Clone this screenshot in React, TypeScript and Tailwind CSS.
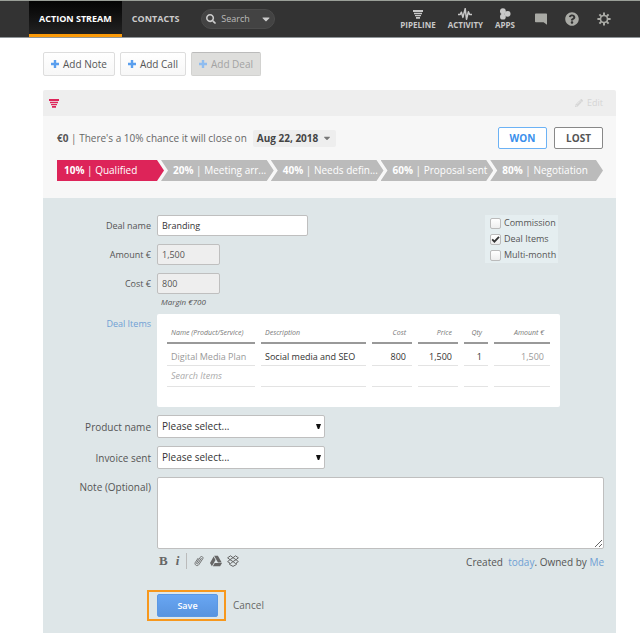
import React from "react";
import { FaCaretDown, FaGoogleDrive, FaPencilAlt, FaQuestionCircle, FaSearch } from "react-icons/fa";

function FunnelIcon({ className }: { className: string }) {
  return (
    <svg viewBox="0 0 10 9" className={"h-[9px] w-2.5 " + className} fill="currentColor" aria-hidden="true">
      <path d="M0 0h10v2H0zM1 2.700h8v1.500H1zM2 4.900h6v1.400H2zM3 7h4v1.800H3z" />
    </svg>
  );
}

function PlusIcon({ className }: { className: string }) {
  return (
    <svg viewBox="0 0 8 8" className={"size-2 " + className} fill="none" stroke="currentColor" strokeWidth="2.4" aria-hidden="true">
      <path d="M4 0v8M0 4h8" />
    </svg>
  );
}

function PulseIcon() {
  return (
    <svg viewBox="0 0 14 12" className="h-3 w-3.5" fill="none" stroke="currentColor" strokeWidth="1.5" strokeLinejoin="round" aria-hidden="true">
      <path d="M0 6.5h2.2l1.2-2.3 1.5 5.2L7.2.6l1.3 10.6 1.9-7.4 1.2 2.7H14" />
    </svg>
  );
}

function AppsIcon() {
  return (
    <svg viewBox="0 0 12 12" className="h-3 w-3" fill="currentColor" aria-hidden="true">
      <circle cx="3.9" cy="3.2" r="2.9" />
      <circle cx="8.6" cy="5.8" r="2.9" />
      <circle cx="3.9" cy="8.7" r="2.9" />
    </svg>
  );
}

function ChatIcon() {
  return (
    <svg viewBox="0 0 12 12" className="h-3 w-3" fill="currentColor" aria-hidden="true">
      <path d="M.8.4h10.4q.8 0 .8.8v10.5L8.6 9.2H.8Q0 9.2 0 8.4V1.2Q0 .4.8.4z" />
    </svg>
  );
}

function GearIcon() {
  return (
    <svg viewBox="-7 -7 14 14" className="size-3.5" fill="none" stroke="currentColor" aria-hidden="true">
      <circle r="3.5" strokeWidth="1.6" />
      <g strokeWidth="2">
        <path d="M0-6.6V-4M0 6.6V4M-6.6 0H-4M6.6 0H4M-4.6-4.6l1.8 1.8M4.6 4.6 2.8 2.8M-4.6 4.6l1.8-1.8M4.6-4.6 2.8-2.8" />
      </g>
    </svg>
  );
}

function ClipIcon() {
  return (
    <svg viewBox="0 0 10 12" className="h-3 w-2.5" fill="none" stroke="currentColor" strokeWidth="0.9" strokeLinecap="round" aria-hidden="true">
      <path d="M7.3 3.4 3.9 8.5c-.6.9-1.8.1-1.2-.8L6.2 2.3C7.4.5 9.9 2.1 8.7 3.9L4.9 9.6C3.3 12-.2 9.7 1.4 7.3L4 3.4" />
    </svg>
  );
}

function DropboxIcon() {
  return (
    <svg viewBox="0 0 12 12" className="size-3" fill="none" stroke="currentColor" strokeWidth="1" strokeLinejoin="round" aria-hidden="true">
      <path d="M3.5.8 6 2.7 3 4.7.6 2.8zM8.5.8 6 2.7l3 2 2.4-1.9zM3 4.7.6 6.6l2.9 1.9L6 6.6zM9 4.7l2.4 1.9-2.9 1.9L6 6.6zM2.6 8.2v1.3L6 11.4l3.4-1.9V8.2" />
    </svg>
  );
}

const navItems = [
  { label: "PIPELINE", icon: <FunnelIcon className="" /> },
  { label: "ACTIVITY", icon: <PulseIcon /> },
  { label: "APPS", icon: <AppsIcon /> },
];

function TopBar() {
  return (
    <header className="flex h-[38px] items-stretch border-t border-b border-t-[#9a9f98] border-b-[#8f9599] bg-[#333] px-[29px]">
      <nav className="flex items-stretch text-[9px] font-bold whitespace-nowrap">
        <a href="#stream" className="flex items-center border-b-[3px] border-[#fb9a09] bg-linear-to-b from-[#050505] to-[#222] px-2.5 pt-[3px] text-white">
          ACTION STREAM
        </a>
        <a href="#contacts" className="flex items-center px-2.5 text-[#ccc]">CONTACTS</a>
      </nav>
      <div className="ml-3 flex h-5 w-[74px] items-center gap-[5px] self-center rounded-full border border-[#4c4c4c] bg-[#434343] pr-0.5 pl-1 text-[#ccc]">
        <FaSearch className="size-2.5 shrink-0" />
        <input aria-label="Search" placeholder="Search" className="w-full min-w-0 bg-transparent text-[9px] outline-none placeholder:text-[#bbb]" />
        <FaCaretDown className="size-3 shrink-0" />
      </div>
      <nav className="ml-auto flex items-center text-[#c8c8c8]">
        <div className="flex gap-3">
          {navItems.map((item) => (
            <a key={item.label} href={"#" + item.label.toLowerCase()} className="flex flex-col items-center text-[8px] leading-[10px] font-bold">
              <span className="flex h-3 items-center">{item.icon}</span>
              {item.label}
            </a>
          ))}
        </div>
        <div className="ml-5 flex items-center gap-[18px] text-[#a9aaa5]">
          <button type="button" aria-label="Messages"><ChatIcon /></button>
          <button type="button" aria-label="Help"><FaQuestionCircle className="size-3.5" /></button>
          <button type="button" aria-label="Settings"><GearIcon /></button>
        </div>
      </nav>
    </header>
  );
}

const addButton = "flex h-6 items-center gap-1 rounded-xs border px-[7px] text-[10px]";

function AddButtons() {
  return (
    <div className="flex gap-[5px]">
      <button type="button" className={addButton + " border-[#ddd] bg-linear-to-b from-white to-[#f7f7f7] text-[#555]"}>
        <PlusIcon className="text-[#5a9fee]" />Add Note
      </button>
      <button type="button" className={addButton + " border-[#ddd] bg-linear-to-b from-white to-[#f7f7f7] text-[#555]"}>
        <PlusIcon className="text-[#5a9fee]" />Add Call
      </button>
      <button type="button" disabled className={addButton + " border-[#d2d2d0] border-t-[#bbb] bg-[#dededc] text-[#a3a3a3]"}>
        <PlusIcon className="text-[#8fbdf0]" />Add Deal
      </button>
    </div>
  );
}

const stages = [
  { percent: "20%", name: "Meeting arr..." },
  { percent: "40%", name: "Needs defin..." },
  { percent: "60%", name: "Proposal sent" },
  { percent: "80%", name: "Negotiation" },
];

function Stages() {
  return (
    <ol className="flex h-[21px] items-stretch text-[10px] whitespace-nowrap text-white">
      <li className="flex w-[107px] shrink-0 items-center bg-[#dd2459] pl-[7px] [clip-path:polygon(0_0,calc(100%-7px)_0,100%_50%,calc(100%-7px)_100%,0_100%)]">
        <span><b>10%</b> | Qualified</span>
      </li>
      {stages.map((stage) => (
        <li key={stage.percent} className="-ml-[3px] flex min-w-0 flex-1 items-center bg-[#bbb] pl-3 [clip-path:polygon(0_0,calc(100%-7px)_0,100%_50%,calc(100%-7px)_100%,0_100%,7px_50%)]">
          <span><b>{stage.percent}</b> | {stage.name}</span>
        </li>
      ))}
    </ol>
  );
}

const outcome = "h-[22px] w-[49px] rounded-xs border bg-white text-[10px] font-bold";

function DealSummary() {
  return (
    <section>
      <div className="flex h-[26px] items-center justify-between rounded-t-xs bg-[#eee] pr-[13px] pl-1.5">
        <FunnelIcon className="text-[#dd2459]" />
        <button type="button" className="flex items-center gap-1 text-[9px] text-[#d5d5d5]">
          <FaPencilAlt className="size-2" />Edit
        </button>
      </div>
      <div className="bg-[#f7f7f7] pt-[11px] pr-[13px] pb-[17px] pl-3.5">
        <div className="mb-[11px] flex items-center text-[10px] text-[#666]">
          <p><b className="text-[#555]">€0</b> | There's a 10% chance it will close on</p>
          <button type="button" className="ml-1.5 flex h-[17px] items-center gap-1 rounded-xs bg-[#eee] px-1 font-bold text-[#444]">
            Aug 22, 2018 <FaCaretDown className="size-2.5 text-[#777]" />
          </button>
          <button type="button" className={outcome + " ml-auto border-[#6cb2f5] text-[#3a8fec]"}>WON</button>
          <button type="button" className={outcome + " ml-[7px] border-[#888] text-[#555]"}>LOST</button>
        </div>
        <Stages />
      </div>
    </section>
  );
}

function Row({ label, id, labelStyle, top, children }: { label: string; id: string; labelStyle: string; top?: boolean; children: React.ReactNode }) {
  return (
    <div className={"flex gap-1.5 " + (top ? "items-start" : "items-center")}>
      <label htmlFor={id} className={"w-24 shrink-0 text-right leading-5 " + labelStyle}>{label}</label>
      {children}
    </div>
  );
}

const smallLabel = "text-[9px] text-[#555]";
const linkLabel = "text-[9px] text-[#6fa0d4]";
const label = "text-[10px] text-[#555]";
const field = "h-[21px] rounded-xs border border-[#bfbfbf] px-1 text-[9px]";

function Check({ label, checked }: { label: string; checked?: boolean }) {
  return (
    <label className="flex h-4 items-center gap-[3px] text-[9px] whitespace-nowrap text-[#555]">
      <span className="grid size-[11px]">
        <input type="checkbox" defaultChecked={checked} className="peer col-start-1 row-start-1 size-[11px] appearance-none rounded-xs border border-[#bbb] bg-linear-to-b from-white to-[#eee]" />
        <svg viewBox="0 0 11 11" className="pointer-events-none invisible col-start-1 row-start-1 peer-checked:visible" fill="none" stroke="#333" strokeWidth="1.8" aria-hidden="true">
          <path d="M2.2 5.4 4.4 7.7 9 2.8" />
        </svg>
      </span>
      {label}
    </label>
  );
}

const columns = [
  { name: "Name (Product/Service)", width: "w-[88px]", align: "text-left" },
  { name: "Description", width: "w-[105px]", align: "text-left" },
  { name: "Cost", width: "w-10", align: "text-right" },
  { name: "Price", width: "w-10", align: "text-right" },
  { name: "Qty", width: "w-6", align: "text-right" },
  { name: "Amount €", width: "w-14", align: "text-right" },
];
const firstItem = ["Digital Media Plan", "Social media and SEO", "800", "1,500", "1", "1,500"];

function ItemsTable() {
  return (
    <div className="rounded-xs bg-white px-1 pt-2.5 pb-5">
      <table id="deal-items" className="w-[395px] table-fixed border-separate border-spacing-x-1.5 border-spacing-y-0">
        <thead>
          <tr>
            {columns.map((c) => (
              <th key={c.name} className={"h-5 border-b-2 border-[#999] p-0 text-[7px] font-normal whitespace-nowrap text-[#777] italic " + c.width + " " + c.align}>
                <span className="pr-1.5 pl-1">{c.name}</span>
              </th>
            ))}
          </tr>
        </thead>
        <tbody>
          <tr>
            {columns.map((c, i) => (
              <td key={c.name} className="h-[22px] border-b border-[#e3e3e3] p-0 pt-1">
                <input aria-label={c.name} defaultValue={firstItem[i]} className={"block w-full pr-1.5 pl-1 text-[9px] " + c.align + (i === 0 || i === 5 ? " text-[#999]" : " text-[#333]")} />
              </td>
            ))}
          </tr>
          <tr>
            {columns.map((c, i) => (
              <td key={c.name} className="h-[21px] border-b border-[#e3e3e3] p-0">
                <input aria-label={"New item " + c.name} placeholder={i === 0 ? "Search Items" : undefined} className="block w-full pr-1.5 pl-1 text-[9px] placeholder:text-[#aaa] placeholder:italic" />
              </td>
            ))}
          </tr>
        </tbody>
      </table>
    </div>
  );
}

function Select({ id }: { id: string }) {
  return (
    <div className="grid w-[168px] items-center">
      <select id={id} className="col-start-1 row-start-1 h-[23px] w-full appearance-none rounded-xs border border-[#bfbfbf] bg-white px-1 text-[10px] text-[#333]">
        <option>Please select...</option>
      </select>
      <svg viewBox="0 0 5 5" className="pointer-events-none col-start-1 row-start-1 mr-1 size-[5px] justify-self-end" fill="#111" aria-hidden="true">
        <path d="M0 0h5L3.2 5H1.8z" />
      </svg>
    </div>
  );
}

function DealForm() {
  return (
    <form className="rounded-b-xs bg-[#dee6e8] px-3 pt-[17px] pb-3.5" onSubmit={(e) => e.preventDefault()}>
      <div className="flex items-start justify-between">
        <div className="flex flex-col gap-2">
          <Row label="Deal name" id="deal-name" labelStyle={smallLabel}><input id="deal-name" defaultValue="Branding" className={field + " w-[151px] bg-white text-[#333]"} /></Row>
          <Row label="Amount €" id="amount" labelStyle={smallLabel}><input id="amount" readOnly defaultValue="1,500" className={field + " w-[63px] bg-[#eee] text-[#555]"} /></Row>
          <Row label="Cost €" id="cost" labelStyle={smallLabel}><input id="cost" readOnly defaultValue="800" className={field + " w-[63px] bg-[#eee] text-[#555]"} /></Row>
        </div>
        <fieldset className="mr-[46px] w-[73px] bg-[#e5eef0] pl-[5px]">
          <Check label="Commission" />
          <Check label="Deal Items" checked />
          <Check label="Multi-month" />
        </fieldset>
      </div>
      <p className="mt-0.5 ml-[106px] text-[8px] leading-3 text-[#555] italic">Margin €700</p>
      <div className="mt-1.5 flex flex-col gap-2">
        <Row label="Deal Items" id="deal-items" top labelStyle={linkLabel}><ItemsTable /></Row>
        <Row label="Product name" id="product" labelStyle={label}><Select id="product" /></Row>
        <Row label="Invoice sent" id="invoice" labelStyle={label}><Select id="invoice" /></Row>
        <Row label="Note (Optional)" id="note" top labelStyle={label}>
          <textarea id="note" className="block h-[72px] min-w-0 flex-1 resize-y rounded-xs border border-[#bfbfbf] bg-white p-1 text-[10px]" />
        </Row>
      </div>
      <div className="mt-1 ml-[104px] flex items-start justify-between text-[#666]">
        <div className="flex h-4 items-center font-['Liberation_Serif',serif] text-[13px] font-bold">
          <button type="button" aria-label="Bold">B</button>
          <button type="button" aria-label="Italic" className="ml-2 italic">i</button>
          <span className="mx-[7px] h-4 w-px bg-[#bbb]" />
          <button type="button" aria-label="Attach a file"><ClipIcon /></button>
          <button type="button" aria-label="Google Drive" className="ml-1.5"><FaGoogleDrive className="size-3" /></button>
          <button type="button" aria-label="Dropbox" className="ml-[5px]"><DropboxIcon /></button>
        </div>
        <p className="pt-0.5 text-[10px] text-[#555]">
          Created&nbsp; <a href="#today" className="text-[#6fa0d4]">today</a>. Owned by <a href="#me" className="text-[#6fa0d4]">Me</a>
        </p>
      </div>
      <div className="mt-5 ml-[92px] flex items-center gap-[7px]">
        <div className="border-2 border-[#f7981d] py-0.5 pr-1.5 pl-2">
          <button type="submit" className="block h-[23px] w-[61px] rounded-xs border border-[#5b98e4] bg-linear-to-b from-[#68a6f3] to-[#5994df] text-[9px] font-semibold text-white">Save</button>
        </div>
        <button type="button" className="text-[10px] text-[#666]">Cancel</button>
      </div>
    </form>
  );
}

export default function App() {
  return (
    <div className="min-h-screen bg-white font-['Open_Sans',sans-serif]">
      <TopBar />
      <main className="pt-[14px] pr-6 pl-[43px]">
        <AddButtons />
        <div className="mt-3.5">
          <DealSummary />
          <DealForm />
        </div>
      </main>
    </div>
  );
}
